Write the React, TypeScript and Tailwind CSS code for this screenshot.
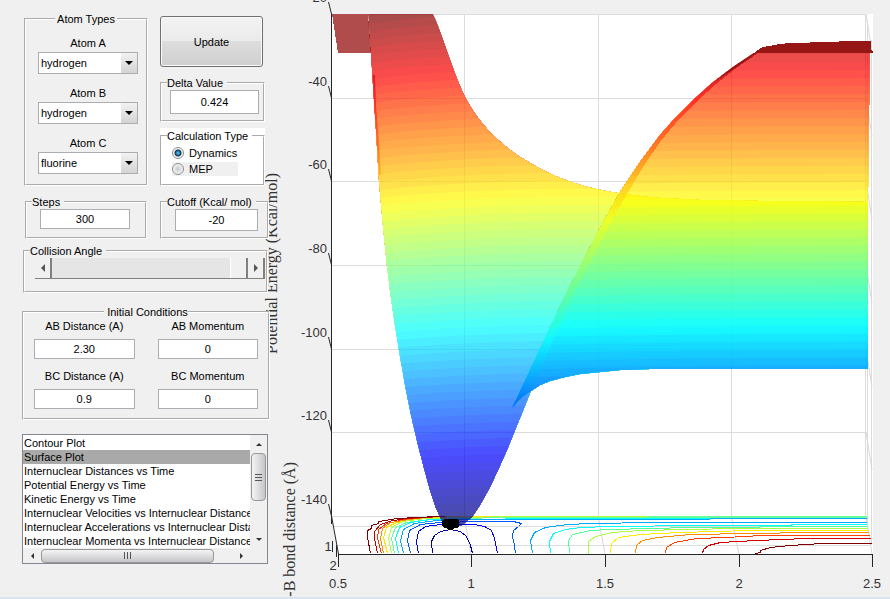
import React from "react";

const BAND_COUNT = 64;

function jet(t: number): string {
  const channel = (centre: number) =>
    Math.round(255 * Math.max(0, Math.min(1, 1.5 - Math.abs(4 * t - centre))));
  return `rgb(${channel(3)},${channel(2)},${channel(1)})`;
}

const bands = Array.from({ length: BAND_COUNT }, (_, k) => ({
  y: 6 + k * 8,
  color: jet(1 - (k + 0.5) / BAND_COUNT),
}));

const VALLEY =
  "M368,14 H433 C441,30 452,70 465,97 C485,135 515,158 560,178 C585,188 620,195 660,198 L700,200 L760,201 L868,202 V369 L700,369 L650,369 L620,370 L600,372 L580,374 L565,377 L550,381 L540,385 L531,391 L520,418 L507,450 L498,470 L490,487 L480,505 L472,517 L462,525 L450,529 L442,521 L436,508 L430,490 L424,468 L418,445 L411,415 L405,385 L400,356 L395,325 L390,290 L387,265 L383,225 L379,181 L376,130 L373,85 L371,53 Z";
const RIDGE =
  "M512,408 L563,300 L598,232 L620,192 L640,162 L660,135 L676,117 L692,101 L712,83 L733,67 L754,53 H870 V104 L869,105 V185 L868,187 V369 H700 L650,369 L620,370 L600,372 L580,374 L565,377 L550,381 L540,385 L531,391 L521,398 Z";
const FOLD =
  "M512,408 L563,300 L598,232 L620,192 L640,162 L660,135 L676,117 L692,101 L712,83 L733,67 L754,53 L758,53 L735,69 L716,84 L697,101 L680,118 L660,142 L643,167 L626,196 L604,235 L571,300 L531,391 L521,398 Z";

const contours: [string, string][] = [
  ["#800000", "M370,553 L367,537 L367,530 L371,528 L371,525 L378,523 L378,521 L397,518 L417,517 L437,516 H460"],
  ["#c00000", "M377,553 L374,538 L374,531 L380,524 L392,520 L412,518 L440,517 H480"],
  ["#ff3300", "M381,553 L377,538 L378,529 L386,523 L405,519 L440,517 H500"],
  ["#ff8c00", "M383,553 L380,538 L382,528 L390,522 L410,519 L450,517 H520"],
  ["#ffe600", "M387,553 L383,537 L386,527 L396,522 L416,519 L450,516 H512"],
  ["#b8ff40", "M391,553 L388,538 L391,527 L402,521 L425,518 L512,516 H646"],
  ["#66ff99", "M394,553 L391,538 L395,527 L406,522 L430,519 L500,517 H866 M646,516 H866"],
  ["#00ffff", "M398,553 L395,538 L399,527 L410,522 L430,519 L580,518 H866"],
  ["#00aaff", "M403,553 L400,540 L403,529 L414,523 L436,520 L480,519 H709"],
  ["#00aaff", "M709,518 H866"],
  ["#0055ff", "M410,553 L407,540 L409,530 L420,524 L440,522 L480,521 L513,521 L521,523 L518,526 L513,530 L512,536 L514,545 L515,553"],
  ["#0000ff", "M418,553 L416,541 L418,531 L425,526 L440,524 H474 L484,526 L491,530 L494,538 L497,553"],
  ["#0000a8", "M432,553 L431,541 L434,535 L440,531 L450,529 L460,531 L466,536 L470,545 L472,553"],
  ["#00aaff", "M532,553 L530,540 L534,532 L545,527 L567,524 L590,523 L653,522 H866"],
  ["#00ffff", "M550,553 L549,541 L553,533 L565,529 L580,527 L610,526 L700,525 H790 L792,524 H866"],
  ["#55ff99", "M569,553 L568,540 L572,534 L590,530 L610,529 L690,527 H758 L760,526 H867"],
  ["#aaff44", "M588,553 V541 L595,536 L612,532 L640,530 L735,528 H867"],
  ["#ffee00", "M610,553 L611,543 L618,537 L640,534 L680,532 L750,530 H867"],
  ["#ff8c00", "M635,553 L636,545 L642,540 L657,537 L690,534 L810,532 H868"],
  ["#ff4000", "M665,553 L666,547 L674,542 L696,538 L725,537 L762,535 H869"],
  ["#d40000", "M702,553 L703,549 L708,545 L720,542 L756,540 L806,538 H870"],
  ["#800000", "M755,553 L760,552 L760,550 L770,547 L790,545 L822,543 L871,543"],
];

const zTicks: [number, string][] = [
  [14, "-20"],
  [98, "-40"],
  [181, "-60"],
  [265, "-80"],
  [349, "-100"],
  [432, "-120"],
  [516, "-140"],
];
const xTicks: [number, string][] = [
  [338, "0.5"],
  [471, "1"],
  [605, "1.5"],
  [739, "2"],
  [872, "2.5"],
];

function SurfacePlot() {
  return (
    <svg
      viewBox="270 0 620 597"
      className="block h-auto w-full overflow-visible"
      role="img"
      aria-label="Potential energy surface"
    >
      <defs>
        <clipPath id="valley">
          <path d={VALLEY} shapeRendering="crispEdges" />
        </clipPath>
        <clipPath id="ridge">
          <path d={RIDGE} shapeRendering="crispEdges" />
        </clipPath>
        <linearGradient id="fold" gradientUnits="userSpaceOnUse" x1="0" y1="53" x2="0" y2="408">
          <stop offset="0" stopColor="#941212" />
          <stop offset="0.13" stopColor="#ff1919" />
          <stop offset="0.27" stopColor="#ff6a14" />
          <stop offset="0.37" stopColor="#ffc414" />
          <stop offset="0.47" stopColor="#f4ff20" />
          <stop offset="0.66" stopColor="#70ff90" />
          <stop offset="0.81" stopColor="#10faff" />
          <stop offset="1" stopColor="#0068f8" />
        </linearGradient>
      </defs>

      <path d="M331,14 H873 V554 H338 L331,514 Z" fill="#ffffff" />

      <g stroke="#dcdcdc" fill="none" shapeRendering="crispEdges">
        {zTicks.map(([y]) => (
          <path key={y} d={`M332,${y + 0.5} H866`} />
        ))}
        <path d="M333,526.5 H868 M336,545.5 H871" />
        <path d="M464.5,14 V516 M598.5,14 V516 M731.5,14 V516 M865.5,14 V516 M867.5,20 V526 M871.5,40 V545" />
      </g>
      <g stroke="#d8d8d8" fill="none">
        {zTicks.map(([y]) => (
          <path key={y} d={`M866,${y} L872,${y + 38}`} />
        ))}
        <path d="M464,516 L471,554 M598,516 L605,554 M731,516 L739,554" />
      </g>

      <g fill="none" shapeRendering="crispEdges" transform="translate(0.5 0.5)">
        {contours.map(([color, d], i) => (
          <path key={i} d={d} stroke={color} />
        ))}
      </g>

      <path d="M332,14 H368 L371,53 H338 Z" fill="#b04c4c" shapeRendering="crispEdges" />
      <g opacity="0.7">
        <g clipPath="url(#valley)">
          {bands.map(({ y, color }, k) => (
            <path
              key={k}
              d={`M360,${k === 0 ? 0 : y + 12} Q400,${y + 2} 540,${y - 1} L900,${y - 2} V600 H360 Z`}
              fill={color}
            />
          ))}
        </g>
      </g>
      <g opacity="0.7">
        <g clipPath="url(#ridge)">
          {bands.map(({ y, color }, k) => (
            <path key={k} d={`M500,${y + 4} Q620,${y} 900,${y} V600 H500 Z`} fill={color} />
          ))}
        </g>
      </g>
      <path d={FOLD} fill="url(#fold)" opacity="0.75" shapeRendering="crispEdges" />
      <path
        d="M714,82 L733,67 L754,53 L758,50 L763,47 L769,46 L780,44 L790,43 L830,42 L848,41 H871 V50 L873,51 V53 H756 L735,68 Z"
        fill="#961616"
        shapeRendering="crispEdges"
      />
      <path d="M374,75 L375,105 L377,130 L380,175" fill="none" stroke="url(#fold)" strokeWidth="2" opacity="0.8" />
      <path
        d="M442,521 L445,519 H457 L459,521 V526 L457,528 H454 L452,530 H448 L446,528 H444 L442,526 Z"
        fill="#000000"
        shapeRendering="crispEdges"
      />

      <g stroke="#262626" fill="none">
        <path d="M331.5,14 V524" shapeRendering="crispEdges" />
        <path d="M331.5,516 L338.5,554 M332.5,541 V552 M336.5,545 V557" />
        <path d="M338,554.5 H873" shapeRendering="crispEdges" />
        {zTicks.map(([y]) => (
          <path key={y} d={`M328.5,${y - 12} L331.5,${y}`} />
        ))}
        {xTicks.map(([x]) => (
          <path key={x} d={`M${x + 0.5},554 V567`} shapeRendering="crispEdges" />
        ))}
      </g>

      <g fill="#333333" className="font-['Liberation_Sans',Arial,sans-serif] text-[13px]">
        {zTicks.map(([y, label]) => (
          <text key={label} x="327" y={y - 12} textAnchor="end">
            {label}
          </text>
        ))}
        {xTicks.map(([x, label]) => (
          <text key={label} x={x} y="588" textAnchor="middle">
            {label}
          </text>
        ))}
        <text x="328" y="551" textAnchor="middle">1</text>
        <text x="333" y="570" textAnchor="middle">2</text>
      </g>
      <g fill="#333333" className="font-['Liberation_Serif','Times_New_Roman',serif] text-[16px]">
        <text transform="translate(277 173) rotate(-90)" textAnchor="end">
          Potential Energy (Kcal/mol)
        </text>
        <text transform="translate(295 462) rotate(-90)" textAnchor="end">
          A-B bond distance (Å)
        </text>
      </g>
    </svg>
  );
}

function Group({
  title,
  className = "",
  legendClassName = "ml-[5px] pr-1",
  children,
}: {
  title: string;
  className?: string;
  legendClassName?: string;
  children: React.ReactNode;
}) {
  return (
    <fieldset className={`min-w-0 border-2 border-white [border-style:groove] ${className}`}>
      <legend className={`leading-[14px] ${legendClassName}`}>{title}</legend>
      {children}
    </fieldset>
  );
}

function Field({ label, value, className = "" }: { label: string; value: string; className?: string }) {
  return (
    <input
      aria-label={label}
      defaultValue={value}
      className={`block border border-[#abadb3] bg-white text-center outline-none ${className}`}
    />
  );
}

function AtomSelect({ id, label, value }: { id: string; label: string; value: string }) {
  return (
    <div className="flex flex-col items-center gap-[2px]">
      <label htmlFor={id} className="leading-[14px]">
        {label}
      </label>
      <div className="relative w-full">
        <select
          id={id}
          defaultValue={value}
          className="block h-[22px] w-full appearance-none border border-[#abadb3] bg-white pt-px pl-[2px] outline-none"
        >
          <option>hydrogen</option>
          <option>fluorine</option>
        </select>
        <span className="pointer-events-none absolute inset-y-px right-px flex w-4 items-center justify-center bg-linear-to-b from-[#f2f2f2] to-[#d4d4d4]">
          <svg viewBox="0 0 8 4" className="h-1 w-2">
            <path d="M0,0 H8 L4,4 Z" />
          </svg>
        </span>
      </div>
    </div>
  );
}

function LabeledField({ id, label, value }: { id: string; label: string; value: string }) {
  return (
    <div className="flex flex-col gap-[6px]">
      <label htmlFor={id} className="text-center leading-[14px]">
        {label}
      </label>
      <input
        id={id}
        defaultValue={value}
        className="h-5 w-full border border-[#abadb3] bg-white text-center outline-none"
      />
    </div>
  );
}

function Radio({ label, checked = false, className = "" }: { label: string; checked?: boolean; className?: string }) {
  return (
    <label className={`flex items-center gap-[5px] leading-[14px] ${className}`}>
      <input
        type="radio"
        name="calculation"
        defaultChecked={checked}
        className="size-3 appearance-none rounded-full border border-[#8a8f94] bg-[radial-gradient(circle,#c8c8c8_0,#f4f4f4_5px)] checked:bg-[radial-gradient(circle,#6fd0f5_0,#1c6f9f_2px,#12324d_3px,#f4f4f4_4px)]"
      />
      {label}
    </label>
  );
}

const arrowButton =
  "flex w-[17px] shrink-0 items-center justify-center border-r-2 border-[#808080] bg-[#f0f0f0]";

const plots = [
  "Contour Plot",
  "Surface Plot",
  "Internuclear Distances vs Time",
  "Potential Energy vs Time",
  "Kinetic Energy vs Time",
  "Internuclear Velocities vs Internuclear Distance",
  "Internuclear Accelerations vs Internuclear Distance",
  "Internuclear Momenta vs Internuclear Distance",
];

function PlotList() {
  return (
    <div className="mt-[14px] mr-[2px] grid h-[130px] grid-cols-[minmax(0,1fr)_17px] grid-rows-[minmax(0,1fr)_15px] border border-[#828790] bg-white">
      <select
        size={8}
        aria-label="Plot type"
        defaultValue="Surface Plot"
        className="h-full w-full appearance-none overflow-hidden bg-white pt-px outline-none"
      >
        {plots.map((name) => (
          <option
            key={name}
            className="block h-[14px] min-h-0 overflow-hidden px-px pt-px pb-0 leading-[14px] whitespace-nowrap text-black checked:bg-[#a9a9a9] checked:bg-linear-to-b checked:from-[#a9a9a9] checked:to-[#a9a9a9]"
          >
            {name}
          </option>
        ))}
      </select>
      <div className="flex flex-col items-center bg-[#f0f0f0]">
        <button type="button" aria-label="Scroll up" className="flex h-[18px] w-full items-center justify-center">
          <svg viewBox="0 0 6 3" className="h-[3px] w-[6px]" fill="#333"><path d="M0,3 L3,0 L6,3 Z" /></svg>
        </button>
        <div className="flex h-12 w-[15px] flex-col items-center justify-center gap-[2px] rounded-sm border border-[#979797] bg-linear-to-r from-[#f4f4f4] to-[#c6c6ca]">
          <span className="h-px w-[7px] bg-[#555]" />
          <span className="h-px w-[7px] bg-[#555]" />
          <span className="h-px w-[7px] bg-[#555]" />
        </div>
        <button type="button" aria-label="Scroll down" className="mt-auto flex h-[18px] w-full items-center justify-center">
          <svg viewBox="0 0 6 3" className="h-[3px] w-[6px]" fill="#333"><path d="M0,0 L3,3 L6,0 Z" /></svg>
        </button>
      </div>
      <div className="flex items-center bg-[#f0f0f0]">
        <button type="button" aria-label="Scroll left" className="flex h-full w-[18px] items-center justify-center">
          <svg viewBox="0 0 3 6" className="h-[6px] w-[3px]" fill="#333"><path d="M3,0 L0,3 L3,6 Z" /></svg>
        </button>
        <div className="flex h-[14px] w-[173px] items-center justify-center gap-[2px] rounded-sm border border-[#979797] bg-linear-to-b from-[#f4f4f4] to-[#c6c6ca]">
          <span className="h-[7px] w-px bg-[#555]" />
          <span className="h-[7px] w-px bg-[#555]" />
          <span className="h-[7px] w-px bg-[#555]" />
        </div>
        <button type="button" aria-label="Scroll right" className="ml-auto flex h-full w-[18px] items-center justify-center">
          <svg viewBox="0 0 3 6" className="h-[6px] w-[3px]" fill="#333"><path d="M0,0 L3,3 L0,6 Z" /></svg>
        </button>
      </div>
      <div className="bg-[#f0f0f0]" />
    </div>
  );
}

export default function App() {
  return (
    <div className="flex min-h-screen flex-col bg-[#f0f0f0] font-['Liberation_Sans',Arial,sans-serif] text-[11px] text-black">
      <div className="flex flex-1 overflow-hidden">
        <aside className="relative z-10 w-[270px] shrink-0 pl-[22px]">
          <div className="grid grid-cols-[124px_105px] gap-x-3 pl-[2px]">
            <Group title="Atom Types" className="mt-3 h-[174px]" legendClassName="mx-auto px-[2px]">
              <div className="mt-[10px] mr-2 ml-3 flex flex-col gap-3">
                <AtomSelect id="atom-a" label="Atom A" value="hydrogen" />
                <AtomSelect id="atom-b" label="Atom B" value="hydrogen" />
                <AtomSelect id="atom-c" label="Atom C" value="fluorine" />
              </div>
            </Group>
            <div className="pt-4">
              <button
                type="button"
                className="block h-[51px] w-[103px] rounded-[3px] border border-[#707070] bg-[linear-gradient(#f2f2f2,#ebebeb_48%,#dddddd_50%,#cfcfcf)] pt-px shadow-[inset_0_0_0_1px_#fafafa]"
              >
                Update
              </button>
              <Group title="Delta Value" className="mt-[9px] h-[46px]">
                <Field label="Delta Value" value="0.424" className="ml-2 h-6 w-[89px]" />
              </Group>
              <div className="mt-[6px] bg-white pt-px">
                <Group title="Calculation Type" className="h-[57px]">
                  <div className="mt-px ml-[10px]">
                    <Radio label="Dynamics" checked className="h-[18px]" />
                    <Radio label="MEP" className="h-[14px] w-[66px] bg-[#f0f0f0]" />
                  </div>
                </Group>
              </div>
            </div>
          </div>

          <div className="mt-[9px] grid grid-cols-[122px_109px] gap-x-[13px] pl-[3px]">
            <Group title="Steps" className="h-11">
              <Field label="Steps" value="300" className="ml-[13px] h-5 w-[90px]" />
            </Group>
            <Group title="Cutoff (Kcal/ mol)" className="h-11 bg-[#f0f0f0]">
              <Field label="Cutoff" value="-20" className="ml-[13px] h-[22px] w-[83px]" />
            </Group>
          </div>

          <Group title="Collision Angle" className="mt-[5px] mr-[2px] ml-px h-[49px] bg-[#f0f0f0]">
            <div className="mr-px ml-[10px] flex h-[21px] border-b border-[#808080]">
              <button type="button" aria-label="Decrease angle" className={arrowButton}>
                <svg viewBox="0 0 4 8" className="h-2 w-1" fill="#555"><path d="M4,0 L0,4 L4,8 Z" /></svg>
              </button>
              <input
                type="range"
                aria-label="Collision Angle"
                defaultValue={100}
                className="h-full w-0 flex-1 appearance-none bg-[#e5e5e5] [&::-webkit-slider-thumb]:h-5 [&::-webkit-slider-thumb]:w-[18px] [&::-webkit-slider-thumb]:appearance-none [&::-webkit-slider-thumb]:border-r-2 [&::-webkit-slider-thumb]:border-[#808080] [&::-webkit-slider-thumb]:bg-[#f0f0f0] [&::-webkit-slider-thumb]:shadow-[inset_1px_0_0_#ffffff]"
              />
              <button type="button" aria-label="Increase angle" className={arrowButton}>
                <svg viewBox="0 0 4 8" className="h-2 w-1" fill="#555"><path d="M0,0 L4,4 L0,8 Z" /></svg>
              </button>
            </div>
          </Group>

          <Group title="Initial Conditions" className="mt-3 h-[115px] bg-[#f0f0f0]" legendClassName="mx-auto pl-[3px]">
            <div className="mx-[10px] grid grid-cols-2 gap-x-[23px] gap-y-[10px]">
              <LabeledField id="ab-distance" label="AB Distance (A)" value="2.30" />
              <LabeledField id="ab-momentum" label="AB Momentum" value="0" />
              <LabeledField id="bc-distance" label="BC Distance (A)" value="0.9" />
              <LabeledField id="bc-momentum" label="BC Momentum" value="0" />
            </div>
          </Group>

          <PlotList />
        </aside>
        <main className="min-w-0 flex-1">
          <SurfacePlot />
        </main>
      </div>
      <div className="h-[2px] bg-[#d9e5f3]" />
    </div>
  );
}
